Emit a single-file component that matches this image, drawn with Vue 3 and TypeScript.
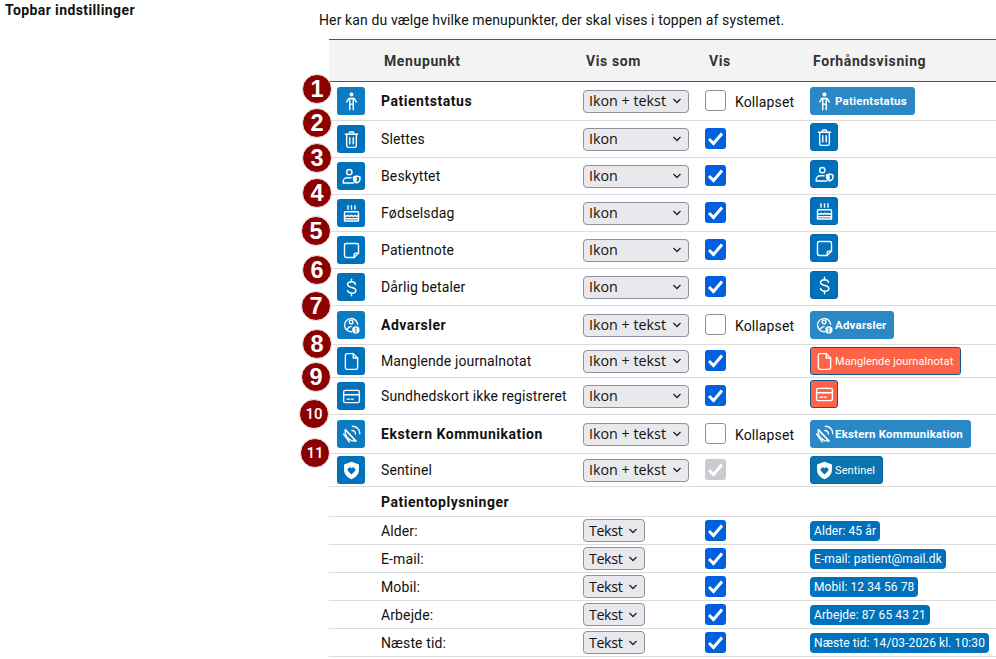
<script setup lang="ts">
import { h } from 'vue'

type IconDef = { stroke?: string[]; fill?: string }
type Row = {
  label: string
  icon: string
  size: 'tall' | 'normal' | 'tight'
  mode: string
  show: 'on' | 'off' | 'locked'
  collapsible?: boolean
  bold?: boolean
  preview: 'collapsed' | 'plain' | 'icon' | 'alert' | 'alert-icon' | 'solid'
}

const icons: Record<string, IconDef> = {
  person: {
    stroke: ['M6.500 12.500 9 8.500h6l2.500 4', 'M10 8.500V21.500', 'M14 8.500V21.500', 'M10 15h4'],
    fill: 'M12 1.800a2.300 2.300 0 1 1 0 4.600A2.300 2.300 0 0 1 12 1.800z',
  },
  trash: {
    stroke: [
      'M5 6h14',
      'M9.500 6V4.500a1 1 0 0 1 1-1h3a1 1 0 0 1 1 1V6',
      'M6.500 6v13a2 2 0 0 0 2 2h7a2 2 0 0 0 2-2V6',
      'M10 10v7',
      'M14 10v7',
    ],
  },
  guard: {
    stroke: [
      'M9.500 4a3 3 0 1 1 0 6a3 3 0 0 1 0-6z',
      'M11.500 13.500H7a4.500 4.500 0 0 0-4.500 4.500V19.500h12',
    ],
    fill: 'M18 10.500l4.500 1.500v3c0 2.600-2 4.300-4.500 5.300-2.500-1-4.500-2.700-4.500-5.300v-3zM18 12.300v6.200c1.500-.7 2.800-1.900 2.800-3.500v-1.800z',
  },
  cake: {
    stroke: [
      'M8 3v4',
      'M12 3v4',
      'M16 3v4',
      'M5 10h14a1 1 0 0 1 1 1v9.500H4V11a1 1 0 0 1 1-1z',
      'M4 14c1.300 1.600 2.700 1.600 4 0 1.300 1.600 2.700 1.600 4 0 1.300 1.600 2.700 1.600 4 0 1.300 1.600 2.700 1.600 4 0',
      'M4 18h16',
    ],
  },
  note: {
    stroke: [
      'M6 4h12a2 2 0 0 1 2 2v9l-5 5H6a2 2 0 0 1-2-2V6a2 2 0 0 1 2-2z',
      'M15 20v-3a2 2 0 0 1 2-2h3',
    ],
  },
  dollar: {
    stroke: [
      'M12 2.500v3',
      'M12 18.500v3',
      'M16.500 8.500c-.4-2-2-3-4.500-3-2.800 0-4.500 1.300-4.500 3.200 0 4.800 9.500 1.900 9.500 6.700 0 2-2 3.100-4.500 3.100-2.700 0-4.500-1.100-5-3',
    ],
  },
  alert: {
    stroke: [
      'M12.500 19A7.500 7.500 0 1 1 19 10.500',
      'M11.500 5.900a2.100 2.100 0 1 1 0 4.200a2.100 2.100 0 0 1 0-4.200z',
      'M7.500 16c.7-1.800 2.200-2.700 4-2.700',
    ],
    fill: 'M17 12.800a4.200 4.200 0 1 1 0 8.400a4.200 4.200 0 0 1 0-8.400zM16.300 14.500v3.200h1.400v-3.200zM16.300 18.400v1.300h1.400v-1.300z',
  },
  file: {
    stroke: ['M7 3h7l5 5v11a2 2 0 0 1-2 2H7a2 2 0 0 1-2-2V5a2 2 0 0 1 2-2z', 'M14 3v5h5'],
  },
  card: {
    stroke: [
      'M5 5h14a2 2 0 0 1 2 2v10a2 2 0 0 1-2 2H5a2 2 0 0 1-2-2V7a2 2 0 0 1 2-2z',
      'M3 10h18',
      'M7 15h3',
      'M12 15h2',
    ],
  },
  dish: {
    stroke: [
      'M5 6.500a11 11 0 0 0 12 13z',
      'M5 6.500 17 19.500',
      'M3 11.500l6.500 9',
      'M12.500 7.500a4 4 0 0 1 4 4',
      'M13 2.500a8.500 8.500 0 0 1 8.500 8.500',
    ],
  },
  shield: {
    fill: 'M12 2l8.500 3v6.500c0 5-3.700 8.600-8.500 10.500-4.800-1.900-8.500-5.500-8.500-10.500V5zM12 16.500l4-4a2.500 2.500 0 0 0-4-3 2.500 2.500 0 0 0-4 3z',
  },
}

const Glyph = (props: { name: string }) => {
  const icon = icons[props.name]
  const parts = (icon.stroke ?? []).map((d) => h('path', { d }))
  if (icon.fill) {
    parts.push(h('path', { d: icon.fill, fill: 'currentColor', stroke: 'none', 'fill-rule': 'evenodd' }))
  }
  return h('svg', { class: 'glyph', viewBox: '0 0 24 24', fill: 'none', stroke: 'currentColor', 'stroke-width': 1.6, 'stroke-linecap': 'round', 'stroke-linejoin': 'round' }, parts)
}
Glyph.props = ['name']

const rows: Row[] = [
  { label: 'Patientstatus', icon: 'person', size: 'tall', mode: 'Ikon + tekst', show: 'off', collapsible: true, bold: true, preview: 'collapsed' },
  { label: 'Slettes', icon: 'trash', size: 'normal', mode: 'Ikon', show: 'on', preview: 'icon' },
  { label: 'Beskyttet', icon: 'guard', size: 'normal', mode: 'Ikon', show: 'on', preview: 'icon' },
  { label: 'Fødselsdag', icon: 'cake', size: 'normal', mode: 'Ikon', show: 'on', preview: 'icon' },
  { label: 'Patientnote', icon: 'note', size: 'normal', mode: 'Ikon', show: 'on', preview: 'icon' },
  { label: 'Dårlig betaler', icon: 'dollar', size: 'normal', mode: 'Ikon', show: 'on', preview: 'icon' },
  { label: 'Advarsler', icon: 'alert', size: 'tall', mode: 'Ikon + tekst', show: 'off', collapsible: true, bold: true, preview: 'collapsed' },
  { label: 'Manglende journalnotat', icon: 'file', size: 'tight', mode: 'Ikon + tekst', show: 'on', preview: 'alert' },
  { label: 'Sundhedskort ikke registreret', icon: 'card', size: 'normal', mode: 'Ikon', show: 'on', preview: 'alert-icon' },
  { label: 'Ekstern Kommunikation', icon: 'dish', size: 'tall', mode: 'Ikon + tekst', show: 'off', collapsible: true, bold: true, preview: 'collapsed' },
  { label: 'Sentinel', icon: 'shield', size: 'tight', mode: 'Ikon + tekst', show: 'locked', preview: 'solid' },
]

const infoRows = [
  { label: 'Alder:', value: 'Alder: 45 år' },
  { label: 'E-mail:', value: 'E-mail: patient@mail.dk' },
  { label: 'Mobil:', value: 'Mobil: 12 34 56 78' },
  { label: 'Arbejde:', value: 'Arbejde: 87 65 43 21' },
  { label: 'Næste tid:', value: 'Næste tid: 14/03-2026 kl. 10:30' },
]

const markers = [
  { n: 1, x: 302, y: 74 },
  { n: 2, x: 302, y: 108 },
  { n: 3, x: 302, y: 143 },
  { n: 4, x: 302, y: 178 },
  { n: 5, x: 301, y: 216 },
  { n: 6, x: 302, y: 255 },
  { n: 7, x: 301, y: 291 },
  { n: 8, x: 302, y: 329 },
  { n: 9, x: 301, y: 362 },
  { n: 10, x: 299, y: 399 },
  { n: 11, x: 300, y: 438 },
]
</script>

<template>
  <div class="page">
    <div class="side-title">Topbar indstillinger</div>
    <div class="content">
      <p class="intro">Her kan du vælge hvilke menupunkter, der skal vises i toppen af systemet.</p>
      <table class="menu-table">
        <colgroup>
          <col class="c-icon" />
          <col class="c-name" />
          <col class="c-mode" />
          <col class="c-show" />
          <col />
        </colgroup>
        <thead>
          <tr>
            <th></th>
            <th>Menupunkt</th>
            <th>Vis som</th>
            <th class="th-show">Vis</th>
            <th>Forhåndsvisning</th>
          </tr>
        </thead>
        <tbody>
          <tr v-for="row in rows" :key="row.label" :class="row.size">
            <td>
              <span class="icon-box" :class="{ faded: row.preview === 'collapsed' }">
                <Glyph :name="row.icon" />
              </span>
            </td>
            <td :class="row.bold ? 'strong' : 'plain-label'">{{ row.label }}</td>
            <td>
              <select class="mode" :value="row.mode">
                <option>Ikon + tekst</option>
                <option>Ikon</option>
                <option>Tekst</option>
              </select>
            </td>
            <td>
              <label class="show">
                <input
                  type="checkbox"
                  :checked="row.show !== 'off'"
                  :disabled="row.show === 'locked'"
                />
                <span v-if="row.collapsible" class="collapse-label">Kollapset</span>
              </label>
            </td>
            <td>
              <div class="preview" :class="row.preview">
                <Glyph :name="row.icon" />
                <span v-if="row.preview !== 'icon' && row.preview !== 'alert-icon'">{{ row.label }}</span>
              </div>
            </td>
          </tr>
          <tr class="section">
            <td></td>
            <td class="strong" colspan="4">Patientoplysninger</td>
          </tr>
          <tr v-for="info in infoRows" :key="info.label" class="info">
            <td></td>
            <td class="plain-label">{{ info.label }}</td>
            <td>
              <select class="mode narrow" value="Tekst">
                <option>Tekst</option>
                <option>Ikon</option>
              </select>
            </td>
            <td>
              <label class="show"><input type="checkbox" checked /></label>
            </td>
            <td><span class="pill">{{ info.value }}</span></td>
          </tr>
        </tbody>
      </table>
    </div>
    <span
      v-for="m in markers"
      :key="m.n"
      class="marker"
      :class="{ wide: m.n > 9 }"
      :style="{ left: m.x + 'px', top: m.y + 'px' }"
    >{{ m.n }}</span>
  </div>
</template>

<style scoped>
.page {
  position: relative;
  display: flex;
  width: 996px;
  font-family: Roboto, "Liberation Sans", sans-serif;
  font-size: 14px;
  color: #111;
}
.side-title {
  width: 314px;
  padding: 2px 0 0 5px;
  font-weight: 700;
  line-height: 16px;
  letter-spacing: 0.4px;
  flex-shrink: 0;
}
.content {
  flex: 1;
  min-width: 0;
}
.intro {
  margin: 12px 0 0;
  line-height: 17px;
  height: 27px;
  letter-spacing: 0.115px;
}
.menu-table {
  margin-left: 10px;
  width: 667px;
  table-layout: fixed;
  border-collapse: separate;
  border-spacing: 0;
}
.c-icon { width: 52px; }
.c-name { width: 202px; }
.c-mode { width: 122px; }
.c-show { width: 105px; }
th {
  height: 41px;
  padding: 0 0 0 3px;
  background: #f3f3f3;
  border-top: 1px solid #1d6399;
  border-bottom: 1px solid #1d6399;
  text-align: left;
  font-weight: 700;
  color: #333;
  font-size: 14px;
  letter-spacing: 0.6px;
}
th.th-show {
  padding-left: 4px;
}
td {
  padding: 0;
  border-bottom: 1px solid #dcdcdc;
  vertical-align: middle;
}
tr.tall td { height: 38px; }
tr.normal td { height: 36px; }
tr.tight td { height: 32px; }
tr.section td { height: 29px; }
tr.info td { height: 27px; }
.strong {
  font-weight: 700;
  letter-spacing: 0.53px;
}
.plain-label {
  letter-spacing: 0.12px;
}
.icon-box {
  display: flex;
  align-items: center;
  justify-content: center;
  width: 28px;
  height: 28px;
  margin-left: 8px;
  background: #0072bc;
  border-radius: 3px;
  color: #fff;
}
.icon-box.faded {
  background: #0c7cc2;
}
.glyph {
  width: 21px;
  height: 21px;
  flex-shrink: 0;
}
.mode {
  display: block;
  appearance: none;
  width: 106px;
  height: 23px;
  padding: 0 0 2px 5px;
  border: 1px solid #8f8f9d;
  border-radius: 4px;
  background-color: #e9e9ed;
  background-image: url("data:image/svg+xml,%3Csvg xmlns='http://www.w3.org/2000/svg' width='10' height='6'%3E%3Cpath d='M1.500 1l3.500 3.500L8.500 1' fill='none' stroke='%23222' stroke-width='1.300'/%3E%3C/svg%3E");
  background-repeat: no-repeat;
  background-position: right 6px center;
  font-family: "Open Sans", sans-serif;
  font-size: 14.3px;
  color: #111;
}
.mode.narrow {
  width: 62px;
  padding-bottom: 0;
  letter-spacing: -0.4px;
}
.show {
  display: flex;
  align-items: center;
}
tr.tall .show,
tr.normal .show,
tr.tight .show {
  margin-bottom: 1px;
}
.show input {
  appearance: none;
  width: 21px;
  height: 21px;
  margin: 0;
  border: 1px solid #8f8f9d;
  border-radius: 3px;
  background: #fff;
}
.show input:checked {
  border: 0;
  background-color: #0060df;
  background-image: url("data:image/svg+xml,%3Csvg xmlns='http://www.w3.org/2000/svg' viewBox='0 0 21 21'%3E%3Cpath d='M4 11l4.500 4.500L17 5.500' fill='none' stroke='%23fff' stroke-width='3'/%3E%3C/svg%3E");
}
.show input:disabled {
  background-color: #cbcbcf;
}
.collapse-label {
  margin: 3px 0 0 9px;
  letter-spacing: 0.12px;
}
.preview {
  display: inline-flex;
  align-items: center;
  vertical-align: middle;
  height: 28px;
  padding: 0 7px 0 3px;
  box-sizing: border-box;
  border: 1px solid #0a66a6;
  border-radius: 3px;
  background: #0072bc;
  color: #fff;
  font-size: 11px;
  letter-spacing: 0.1px;
}
.preview.collapsed {
  border-color: #2a88c6;
  background: #2a88c6;
  font-weight: 700;
  font-size: 11.5px;
  letter-spacing: 0.2px;
}
.preview.alert,
.preview.alert-icon {
  border-color: #14598c;
  background: #ff6347;
}
.preview.icon,
.preview.alert-icon {
  width: 28px;
  padding: 0;
  justify-content: center;
  margin-bottom: 4px;
}
.preview.solid {
  border-color: #0a66a6;
  background: #0a74ae;
}
.pill {
  display: inline-block;
  vertical-align: middle;
  height: 20px;
  padding: 0 4px;
  border-radius: 4px;
  background: #0072bc;
  color: #fff;
  font-size: 12px;
  letter-spacing: 0.1px;
  line-height: 20px;
  white-space: nowrap;
}
.marker {
  position: absolute;
  display: flex;
  align-items: center;
  justify-content: center;
  box-sizing: border-box;
  width: 30px;
  height: 30px;
  border: 1px solid #f0e6e6;
  border-radius: 50%;
  background: #8b0000;
  color: #fff;
  font-family: "Liberation Sans", Arial, sans-serif;
  font-size: 23.5px;
  font-weight: 700;
}
.marker.wide {
  font-family: Roboto, sans-serif;
  font-size: 15px;
  font-weight: 500;
}
</style>
